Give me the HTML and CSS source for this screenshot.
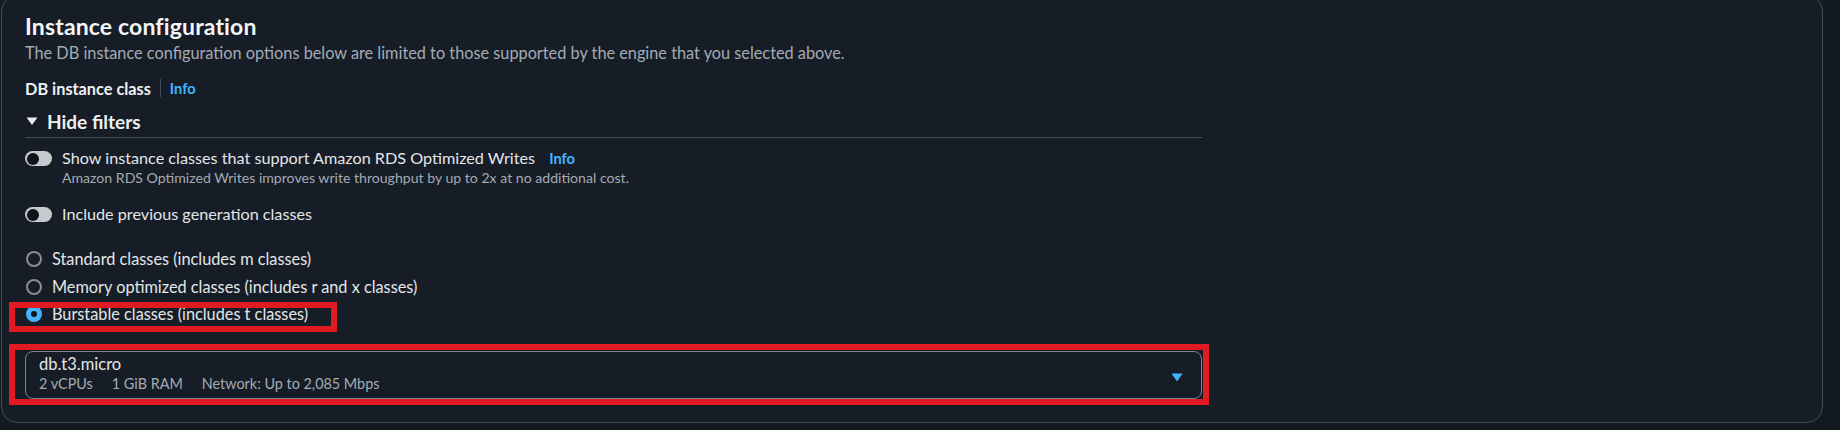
FILE: index.html
```html
<!DOCTYPE html>
<html lang="en">
<head>
<meta charset="utf-8">
<title>Instance configuration</title>
<link rel="stylesheet" href="styles.css">
</head>
<body>
<div class="page">
  <section class="panel">
    <header class="panel-head">
      <h2 class="panel-title">Instance configuration</h2>
      <p class="panel-desc">The DB instance configuration options below are limited to those supported by the engine that you selected above.</p>
    </header>
    <div class="field">
      <div class="label-row">
        <span class="label">DB instance class</span>
        <span class="sep"></span>
        <a class="info">Info</a>
      </div>
      <div class="expander">
        <svg class="caret" width="12" height="10" viewBox="0 0 12 10"><path d="M0.5 1.5 H11.5 L6 9 Z" fill="#e9ebed"/></svg>
        <span class="expander-text">Hide filters</span>
      </div>
      <div class="divider"></div>

      <div class="toggle-row">
        <span class="toggle"><span class="knob"></span></span>
        <div class="toggle-text">
          <div class="toggle-label">Show instance classes that support Amazon RDS Optimized Writes <a class="info info-inline">Info</a></div>
          <div class="toggle-sub">Amazon RDS Optimized Writes improves write throughput by up to 2x at no additional cost.</div>
        </div>
      </div>
      <div class="toggle-row toggle-row-2">
        <span class="toggle"><span class="knob"></span></span>
        <div class="toggle-text">
          <div class="toggle-label">Include previous generation classes</div>
        </div>
      </div>

      <div class="radios">
        <div class="radio-row"><span class="radio"></span><span class="radio-label">Standard classes (includes m classes)</span></div>
        <div class="radio-row"><span class="radio"></span><span class="radio-label">Memory optimized classes (includes r and x classes)</span></div>
        <div class="radio-row highlighted"><span class="radio checked"></span><span class="radio-label">Burstable classes (includes t classes)</span></div>
      </div>

      <div class="select highlighted-select">
        <div class="select-text">
          <div class="select-main">db.t3.micro</div>
          <div class="select-sub"><span>2 vCPUs</span><span>1 GiB RAM</span><span>Network: Up to 2,085 Mbps</span></div>
        </div>
        <svg class="select-caret" width="12" height="9" viewBox="0 0 12 9"><path d="M0.5 0.5 H11.5 L6 8.5 Z" fill="#42b4ff"/></svg>
      </div>
    </div>
  </section>
</div>
</body>
</html>
```

FILE: styles.css
```css
*, *::before, *::after { box-sizing: border-box; }
html, body {
  margin: 0;
  padding: 0;
  background: #131920;
  height: 100%;
  overflow: hidden;
}
body {
  font-family: Lato, "Open Sans", Arial, sans-serif;
  color: #d1d5db;
}
.page {
  padding: 0 17px 0 1px;
}
.panel {
  margin-top: -5px;
  height: 428px;
  background: #161d26;
  border: 1px solid #414d5c;
  border-radius: 16px;
  padding: 16px 23px 0 23px;
}
.panel-title {
  margin: 0;
  font-size: 23px;
  line-height: 28px;
  font-weight: 700;
  letter-spacing: 0.15px;
  color: #f4f5f6;
}
.panel-desc {
  margin: 2px 0 0 0;
  font-size: 16.3px;
  line-height: 22px;
  color: #a4abb5;
}
.field {
  width: 1177px;
}
.label-row {
  margin-top: 13px;
  display: flex;
  align-items: center;
  height: 22px;
}
.label {
  font-size: 16.3px;
  font-weight: 700;
  color: #eef0f2;
}
.sep {
  width: 1px;
  height: 18px;
  background: #414d5c;
  margin: 0 9px 0 9px;
}
.info {
  color: #42b4ff;
  font-weight: 700;
  font-size: 14.6px;
}
.expander {
  margin-top: 10px;
  height: 24px;
  display: flex;
  align-items: center;
  gap: 9px;
}
.caret { display: block; margin-left: 1px; }
.expander-text {
  font-size: 19px;
  font-weight: 700;
  color: #eef0f2;
}
.divider {
  margin-top: 4px;
  height: 1px;
  background: #414d5c;
}
.toggle-row {
  margin-top: 10px;
  display: flex;
  align-items: flex-start;
  gap: 10px;
}
.toggle-row-2 { margin-top: 17px; }
.toggle {
  margin-top: 3px;
  width: 27px;
  height: 15px;
  border-radius: 8px;
  background: #c6c9ce;
  position: relative;
  flex: none;
}
.knob {
  position: absolute;
  left: 1.5px;
  top: 1.5px;
  width: 12px;
  height: 12px;
  border-radius: 50%;
  background: #0f141a;
}
.toggle-label {
  font-size: 16.2px;
  line-height: 20px;
  color: #e3e6e9;
}
.info-inline { margin-left: 10px; }
.toggle-sub {
  font-size: 14.1px;
  line-height: 18px;
  color: #a4abb5;
}
.radios {
  margin-top: 25px;
  display: flex;
  flex-direction: column;
  gap: 7.5px;
}
.radio-row {
  display: flex;
  align-items: center;
  gap: 10px;
  height: 20px;
  position: relative;
}
.radio {
  width: 16px;
  height: 16px;
  border-radius: 50%;
  border: 2px solid #8c8c94;
  flex: none;
  margin-left: 1px;
}
.radio.checked {
  border: 5px solid #42b4ff;
  background: #0f141a;
}
.radio-label {
  font-size: 16.3px;
  line-height: 20px;
  color: #e3e6e9;
}
.highlighted::after {
  content: "";
  position: absolute;
  left: -16px;
  top: -2px;
  width: 328px;
  height: 30px;
  border: 6px solid #e01b22;
}
.select {
  margin-top: 27px;
  position: relative;
  height: 48px;
  border: 1px solid #7d848d;
  border-radius: 8px;
  padding: 2px 18px 0 13px;
  display: flex;
  align-items: center;
  justify-content: space-between;
}
.select-text { align-self: flex-start; }
.select-main {
  font-size: 16.5px;
  line-height: 20px;
  color: #e3e6e9;
}
.select-sub {
  font-size: 14.4px;
  line-height: 19px;
  color: #a4abb5;
  display: flex;
  gap: 19px;
}
.select-caret { display: block; margin-top: 2px; }
.highlighted-select::after {
  content: "";
  position: absolute;
  left: -17px;
  top: -8px;
  right: -8px;
  bottom: -7px;
  border: 6px solid #e01b22;
}
```
